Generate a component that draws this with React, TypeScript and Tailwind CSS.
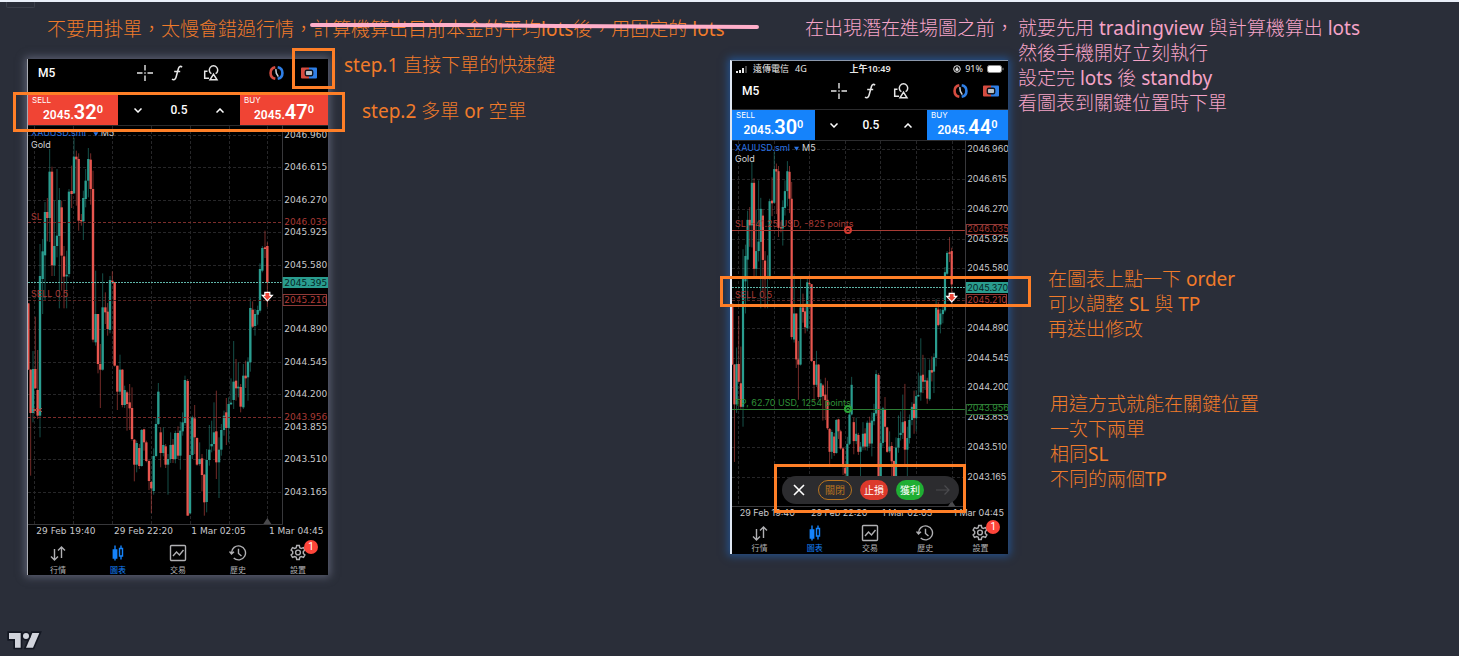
import React from "react";

type Candle = [x: number, top: number, bottom: number, high: number, low: number, up: 0 | 1];

const candles: Candle[] = [
  [25, 538, 737, 538, 737, 0], [32, 737, 867, 735, 1055, 0], [39, 735, 867, 681, 895, 1], [46, 735, 793, 578, 795, 0],
  [53, 798, 875, 678, 885, 0], [60, 456, 875, 360, 940, 1], [68, 382, 465, 345, 570, 1], [75, 264, 394, 234, 530, 1],
  [82, 264, 282, 222, 352, 0], [89, 143, 282, 75, 354, 1], [96, 143, 424, 128, 456, 0], [103, 366, 424, 230, 456, 1],
  [111, 335, 366, 135, 400, 1], [118, 228, 336, 192, 553, 1], [125, 250, 395, 230, 500, 0], [132, 397, 458, 366, 553, 0],
  [140, 452, 457, 380, 553, 1], [147, 203, 450, 195, 460, 1], [155, 201, 210, 125, 252, 0], [162, 98, 208, 42, 210, 1],
  [169, 98, 106, 80, 245, 0], [176, 105, 290, 88, 320, 0], [184, 288, 292, 270, 305, 0], [190, 222, 292, 200, 348, 1],
  [197, 170, 225, 135, 250, 1], [205, 105, 170, 72, 220, 1], [212, 107, 195, 88, 242, 0], [219, 195, 647, 140, 655, 0],
  [227, 570, 655, 440, 665, 1], [234, 570, 720, 570, 748, 0], [241, 720, 737, 660, 852, 0], [248, 550, 737, 448, 740, 1],
  [256, 550, 565, 505, 600, 0], [263, 563, 615, 537, 635, 0], [270, 468, 618, 456, 628, 1], [277, 470, 474, 442, 480, 0],
  [284, 474, 725, 474, 728, 0], [292, 725, 803, 725, 858, 0], [300, 737, 803, 692, 810, 1], [307, 737, 843, 735, 850, 0],
  [314, 798, 843, 785, 852, 1], [321, 805, 840, 800, 920, 0], [329, 835, 853, 780, 918, 0], [336, 852, 945, 790, 950, 0],
  [343, 947, 1022, 945, 1072, 0], [350, 957, 1022, 950, 1045, 1], [358, 972, 1026, 960, 1035, 0], [365, 918, 1026, 915, 1028, 1],
  [372, 916, 955, 914, 980, 0], [379, 955, 1011, 950, 1015, 0], [387, 1011, 1071, 1008, 1098, 0], [394, 1074, 1093, 1070, 1167, 0],
  [401, 996, 1101, 973, 1112, 1], [408, 900, 996, 882, 1000, 1], [415, 803, 900, 777, 903, 1], [422, 925, 987, 910, 1030, 0],
  [430, 963, 987, 910, 997, 1], [437, 967, 1022, 960, 1032, 0], [444, 1005, 1022, 990, 1112, 1], [452, 963, 1005, 925, 1017, 1],
  [459, 962, 1005, 945, 1017, 0], [466, 927, 1005, 920, 1018, 1], [474, 927, 995, 907, 1005, 0], [481, 920, 995, 893, 1037, 1],
  [488, 895, 922, 865, 935, 1], [495, 768, 897, 755, 905, 1], [503, 771, 1175, 765, 1175, 0], [510, 993, 1168, 885, 1172, 1],
  [517, 880, 993, 875, 1005, 1], [524, 883, 940, 843, 990, 0], [531, 942, 1022, 940, 1025, 0], [539, 1005, 1020, 955, 1025, 1],
  [546, 1003, 1053, 990, 1102, 0], [553, 1052, 1135, 1050, 1175, 0], [560, 1008, 1134, 975, 1165, 1], [568, 977, 1008, 903, 1025, 1],
  [575, 960, 967, 890, 985, 1], [582, 925, 960, 835, 980, 1], [589, 922, 1015, 800, 1065, 0], [597, 977, 1015, 940, 1122, 1],
  [604, 918, 977, 900, 995, 1], [612, 875, 918, 860, 935, 1], [619, 865, 912, 822, 963, 0], [626, 840, 912, 820, 955, 1],
  [633, 836, 841, 763, 843, 1], [641, 773, 828, 651, 855, 1], [648, 770, 793, 705, 830, 0], [655, 788, 793, 715, 820, 1],
  [662, 789, 848, 780, 865, 0], [670, 755, 850, 720, 855, 1], [677, 755, 763, 710, 792, 0], [684, 713, 760, 700, 830, 1],
  [691, 552, 715, 523, 743, 1], [698, 557, 608, 532, 612, 0], [705, 570, 606, 555, 635, 1], [713, 558, 572, 545, 602, 1],
  [720, 435, 560, 418, 566, 1], [727, 372, 440, 366, 445, 1], [735, 370, 375, 320, 402, 0], [742, 366, 475, 355, 548, 0],
];

const priceTicks: [number, string][] = [
  [34, "2046.960"], [130, "2046.615"], [228, "2046.270"], [325, "2045.925"], [422, "2045.580"], [519, ""],
  [616, "2044.890"], [714, "2044.545"], [811, "2044.200"], [909, "2043.855"], [1006, "2043.510"], [1103, "2043.165"],
];
const timeLines = [43, 160, 277, 393, 509, 626, 742];
const timeTicks: [number, string][] = [[49, "29 Feb 19:40"], [282, "29 Feb 22:20"], [514, "1 Mar 02:05"], [747, "1 Mar 04:45"]];

const RED = "#e8564f";
const GREEN = "#2a9d8f";

function Chart({ width, height, k, lastPrice, lastY, editing }: {
  width: number; height: number; k: number; lastPrice: string; lastY: number; editing: boolean;
}) {
  const X = (v: number) => (v - 24) * k;
  const Y = (v: number) => (v - 3) * k;
  const axis = X(785);
  const label = X(793);
  return (
    <svg className={`block max-w-full ${editing ? "font-[Inter,sans-serif]" : "font-['DejaVu_Sans',sans-serif]"}`} width={width} height={height} viewBox={`0 0 ${width} ${height}`} fontSize="9" role="img" aria-label="XAUUSD.sml M5">
      <path d={`M0 .5H${width}`} stroke="#2b2b2d" />
      <g stroke="#262628" strokeDasharray="3 2">
        {timeLines.map((x) => <path key={x} d={`M${Math.round(X(x)) + 0.5} 1V${Y(1200)}`} />)}
        {priceTicks.map(([y]) => <path key={y} d={`M0 ${Math.round(Y(y)) + 0.5}H${axis}`} />)}
      </g>
      <path d={`M${Math.round(axis) + 0.5} 0V${Math.round(Y(1200)) + 0.5}H0`} stroke="#38383b" fill="none" />
      {candles.map(([x, top, bottom, high, low, up]) => (
        <g key={x} fill={up ? GREEN : RED}>
          <rect x={X(x) - 0.5} y={Y(high)} width="1" height={(low - high) * k} opacity=".5" />
          <rect x={X(x) - 3.6 * k} y={Y(top)} width={7.2 * k} height={(bottom - top) * k} />
        </g>
      ))}
      <path d={`M0 ${Math.round(Y(lastY)) + 0.5}H${axis}`} stroke="#5fb5a9" strokeDasharray="2 1" />
      <path d={`M0 ${Math.round(Y(527)) + 0.5}H${axis}`} stroke="#5a2422" strokeDasharray="3 2" />
      {editing ? (
        <>
          <path d={`M0 ${Math.round(Y(296)) + 0.5}H${axis}`} stroke="#a83c35" />
          <path d={`M0 ${Math.round(Y(881)) + 0.5}H${axis}`} stroke="#2d7d35" />
          <g fill="none" strokeWidth="2">
            <circle cx="116" cy={Y(297)} r="3" stroke="#d53a30" />
            <circle cx="116" cy={Y(882)} r="3" stroke="#2aa537" />
          </g>
          <circle cx="116" cy={Y(297)} r="1" fill="#d53a30" />
          <circle cx="116" cy={Y(882)} r="1" fill="#2aa537" />
        </>
      ) : (
        <>
          <path d={`M0 ${Math.round(Y(295)) + 0.5}H${axis}M0 ${Math.round(Y(880)) + 0.5}H${axis}`} stroke="#7c2d2b" strokeDasharray="3 2" />
          <path d="M5 283l4 4m0-4l-4 4M10 283l4 4m0-4l-4 4" stroke="#b5413b" />
        </>
      )}
      <g fill="#c9c9cc">
        {priceTicks.map(([y, t]) => <text key={y} x={label} y={Y(y) + 3}>{t}</text>)}
        {timeTicks.map(([x, t]) => <text key={x} x={X(x)} y={Y(1221) + 3}>{t}</text>)}
      </g>
      <g className="font-[Inter,sans-serif]" fill="#a93a35">
        <text x="3" y={Y(278) + 3}>{editing ? "SL, -41.25 USD, -825 points" : "SL"}</text>
        <text x="3" y={Y(510) + 3}>SELL 0.5</text>
      </g>
      {editing && <text x="3" y={Y(862) + 3} fill="#2f9038">TP, 62.70 USD, 1254 points</text>}
      <rect x={axis + 1} y={Math.round(Y(lastY)) - 5} width={width} height="11" fill={GREEN} />
      <text x={label} y={Y(lastY) + 4} fill="#06231f">{lastPrice}</text>
      <rect x={axis + 1.5} y={Math.round(Y(527)) - 5.5} width={width - axis - 3} height="11" fill="#000" stroke="#8e3a37" />
      <text x={label} y={Y(527) + 3} fill="#b13c38">2045.210</text>
      {editing && (
        <>
          <rect x={axis + 1.5} y={Math.round(Y(295)) - 4.5} width={width - axis} height="10" fill="#000" stroke="#8e3a37" />
          <rect x={axis + 1.5} y={Math.round(Y(881)) - 4.5} width={width - axis} height="10" fill="#000" stroke="#2d6a33" />
        </>
      )}
      <text x={label} y={Y(295) + 3} fill="#a93a35">2046.035</text>
      <text x={label} y={Y(880) + 3} fill={editing ? "#2f9038" : "#a93a35"}>2043.956</text>
      <path d={`M${X(742) - 2.5} ${Y(514)}v-3h5v3h2.500l-5 5.500l-5-5.500z`} fill="#ef4638" stroke="#fff" strokeWidth="1.200" />
      <path d={`M${X(742)} ${Y(1182)}l4 6h-8z`} fill="#4a4a4d" />
      <g className="font-[Inter,sans-serif]" fill="#d4d4d6">
        <text x="3" y={Y(28) + 3} fill="#2c74e4">XAUUSD.sml</text>
        <path d={`M${Math.max(X(220), 62)} ${Y(25)}h5l-2.500 4z`} fill="#2c74e4" />
        <text x={Math.max(X(242), 70)} y={Y(28) + 3}>M5</text>
        <text x="3" y={Y(64) + 3}>Gold</text>
      </g>
    </svg>
  );
}

const iconButton = "flex items-center justify-center";

function Toolbar() {
  return (
    <div className="grid h-8 shrink-0 grid-cols-[100fr_34fr_32fr_36fr_31fr_32fr_34fr_2fr] items-center pb-1 text-[#e6e6e6]">
      <button className="pl-2.5 text-left font-[Roboto,sans-serif] text-[12px] leading-4 font-medium text-white">M5</button>
      <button className={iconButton} aria-label="crosshair">
        <svg width="16" height="16" viewBox="0 0 16 16" stroke="currentColor" strokeWidth="1.400"><path d="M8 0v5.500M8 10.500V16M0 8h5.500M10.500 8H16M7.300 8h1.400" /></svg>
      </button>
      <button className={iconButton} aria-label="indicators">
        <svg width="12" height="16" viewBox="0 0 12 16" fill="none" stroke="currentColor" strokeWidth="1.600"><path d="M11 2.200C9.800.8 8 1.200 7.400 3.600L5 12.400C4.400 14.800 2.600 15.300 1 14.200M3.200 6.500h6" /></svg>
      </button>
      <button className={iconButton} aria-label="objects">
        <svg width="16" height="16" viewBox="0 0 16 16" fill="none" stroke="currentColor" strokeWidth="1.500"><path d="M4.500 6.200H1.700v7h4.300M10.500 9.200L7 14.800h7z" /><path d="M8.400 8.700A4.200 4.200 0 1 1 12.600 8.700" /></svg>
      </button>
      <span />
      <button className={iconButton} aria-label="timeframe">
        <svg width="17" height="14" viewBox="0 0 17 14" fill="none" strokeWidth="2.600"><path d="M7.300 1.300A5.800 5.800 0 0 0 7.300 12.700" stroke="#d64c40" /><path d="M9.700 1.300a5.800 5.800 0 0 1 0 11.400" stroke="#2f7fe6" /><path d="M7.800 3.200L8.300 7.200l2 3.400" stroke="#c9ced6" strokeWidth="1.500" /></svg>
      </button>
      <button className={iconButton} aria-label="one click trading">
        <svg width="16" height="12" viewBox="0 0 16 12"><path d="M1 .5h7v11H1a1 1 0 0 1-1-1v-9a1 1 0 0 1 1-1z" fill="#d64c40" /><path d="M8 .5h7a1 1 0 0 1 1 1v9a1 1 0 0 1-1 1H8z" fill="#2f7fe6" /><rect x="4.300" y="3.200" width="7.400" height="5.600" rx="1.500" fill="#b9c2ca" stroke="#10161f" strokeWidth="1.400" /></svg>
      </button>
    </div>
  );
}

function Quote({ side, tone, pips }: { side: string; tone: string; pips: string }) {
  return (
    <button className={`flex min-h-0 min-w-0 flex-col items-start justify-start px-1 text-left text-white ${tone}`}>
      <span className="pt-px font-[Inter,sans-serif] text-[8px] leading-2">{side}</span>
      <span className="flex items-baseline self-center leading-4 font-semibold">
        <span className="text-[12px]">2045.</span>
        <span className="text-[20px]">{pips}</span>
        <span className="self-start text-[11px] leading-3">0</span>
      </span>
    </button>
  );
}

function TradeBar({ tone, sell, buy }: { tone: string; sell: string; buy: string }) {
  return (
    <div className="grid h-[31px] shrink-0 grid-cols-[90fr_122fr_88fr] grid-rows-1 border-t border-[#2b2b2d] font-[Roboto,sans-serif]">
      <Quote side="SELL" tone={tone} pips={sell} />
      <div className="grid grid-cols-3 items-center text-white">
        <button className={iconButton} aria-label="less">
          <svg width="8" height="5" viewBox="0 0 8 5" fill="none" stroke="currentColor" strokeWidth="1.500"><path d="M.5.500L4 4 7.500.500" /></svg>
        </button>
        <input aria-label="Volume" defaultValue="0.5" className="w-full min-w-0 bg-transparent text-center text-[12px] leading-4 font-medium" />
        <button className={iconButton} aria-label="more">
          <svg width="8" height="5" viewBox="0 0 8 5" fill="none" stroke="currentColor" strokeWidth="1.500"><path d="M.5 4.500L4 1l3.500 3.500" /></svg>
        </button>
      </div>
      <Quote side="BUY" tone={tone} pips={buy} />
    </div>
  );
}

const tabs: { label: string; icon: React.ReactNode }[] = [
  { label: "行情", icon: <path d="M5.500 5v11M2 12.500L5.500 16 9 12.500M12.500 14V3M9 6.500L12.500 3 16 6.500" /> },
  { label: "圖表", icon: <><path d="M6 1.500v15M12 1.500v14" /><path d="M4.300 6h3.400v8H4.300z" fill="currentColor" /><path d="M10.500 4.500h3v7.500h-3z" fill="#000" /></> },
  { label: "交易", icon: <><rect x="1.500" y="1.500" width="15" height="15" rx="1" /><path d="M4 12l3.500-4 3 3L14.500 6" /></> },
  { label: "歷史", icon: <><path d="M2.500 9a7 7 0 1 1 2.200 5M.5 7.500L2.500 10 5 7.800M9.500 4.800V9.500L12.500 12" /></> },
  { label: "設置", icon: <><path d="M7.700 1.500h2.600l.5 2.200 1.500.8 2.200-.8 1.400 2.400-1.600 1.500v1.800l1.600 1.500-1.400 2.400-2.200-.8-1.500.8-.5 2.200H7.700l-.5-2.200-1.500-.8-2.200.8-1.400-2.400 1.600-1.500V7.600L2.100 6.100l1.400-2.400 2.200.8 1.500-.8z" /><circle cx="9" cy="8.500" r="2.400" /></> },
];

function Nav({ gap }: { gap: string }) {
  return (
    <nav className="grid grid-cols-5 pt-1">
      {tabs.map((t, i) => (
        <button key={t.label} className={`relative flex flex-col items-center ${gap} ${i === 1 ? "text-[#1583fb]" : "text-[#b0b0b3]"}`}>
          <svg width="18" height="18" viewBox="0 0 18 18" fill="none" stroke="currentColor" strokeWidth="1.400">{t.icon}</svg>
          <span className="text-[8px] leading-3">{t.label}</span>
          {i === 4 && (
            <span className="absolute -top-1 left-1/2 ml-1.5 flex size-3.5 items-center justify-center rounded-full bg-[#fd453a] font-[Roboto,sans-serif] text-[10px] leading-3 text-white">1</span>
          )}
        </button>
      ))}
    </nav>
  );
}

function StatusBar() {
  return (
    <div className="grid h-4 shrink-0 grid-cols-3 items-center px-1 text-[9px] leading-3 text-[#e8e8e8]">
      <div className="flex items-center gap-1.5 whitespace-nowrap">
        <svg width="11" height="7" viewBox="0 0 11 7" fill="currentColor"><path d="M0 5h2v2H0zM3 4h2v3H3zM6 2h2v5H6z" /><path d="M9 0h2v7H9z" opacity=".3" /></svg>
        <span>遠傳電信</span>
        <span>4G</span>
      </div>
      <span className="text-center font-semibold whitespace-nowrap">上午10:49</span>
      <div className="flex items-center justify-end gap-1">
        <svg width="8" height="8" viewBox="0 0 8 8" fill="none" stroke="currentColor"><circle cx="4" cy="4" r="3.300" /><path d="M2.800 4h2.400v1.500H2.800zM3.300 4V2.800h1.400V4" fill="currentColor" strokeWidth=".6" /></svg>
        <span>91%</span>
        <svg width="17" height="8" viewBox="0 0 17 8"><rect x=".5" y=".5" width="14" height="7" rx="2" fill="#fff" stroke="#8b8b8b" /><path d="M16 2.800v2.400" stroke="#8b8b8b" /></svg>
      </div>
    </div>
  );
}

function OrderActions() {
  const pill = "flex h-5 items-center justify-center rounded-full text-[10px] leading-3";
  return (
    <div className="absolute bottom-[50px] left-[50px] flex h-7 w-[177px] items-center rounded-full bg-[#2c2c2f] pl-2.5">
      <button aria-label="cancel" className="text-white">
        <svg width="14" height="14" viewBox="0 0 14 14" stroke="currentColor" strokeWidth="1.600"><path d="M2 2l10 10M12 2L2 12" /></svg>
      </button>
      <button className={`${pill} ml-3 w-[34px] border border-[#b9741f] text-[#b9741f]`}>關閉</button>
      <button className={`${pill} ml-2 w-7 bg-[#dc392c] text-white`}>止損</button>
      <button className={`${pill} ml-2 w-7 bg-[#1fae33] text-white`}>獲利</button>
      <button aria-label="send" className="ml-3 text-[#4b4b4e]">
        <svg width="14" height="12" viewBox="0 0 14 12" fill="none" stroke="currentColor" strokeWidth="1.200"><path d="M0 6h13M8.500 1.500L13 6l-4.500 4.500" /></svg>
      </button>
    </div>
  );
}

const note = "absolute whitespace-nowrap font-['Noto_Sans','Noto_Sans_CJK_TC_Light','Noto_Sans_CJK_TC',sans-serif] text-[19px] leading-[25px]";
const frame = "pointer-events-none absolute border-3 border-[#ff7f27]";

export default function App() {
  return (
    <main lang="zh-TW" className="relative min-h-screen overflow-hidden border-t-2 border-[#e9eff9] bg-[#2a2e39] font-['Noto_Sans','Noto_Sans_CJK_TC',sans-serif]">
      <div className="absolute top-0 left-1.5 h-1.5 w-[29px] rounded-b-xs border border-t-0 border-[#3c404b]" />

      <section className="absolute top-[57px] left-[27px] flex h-[516px] w-[301px] flex-col overflow-hidden border-l border-[#a9abb2] bg-black shadow-[0_0_8px_2px_#5c6072]">
        <Toolbar />
        <div className="pt-[3px]">
          <TradeBar tone="bg-[#f04434]" sell="32" buy="47" />
        </div>
        <div className="shrink-0"><Chart width={300} height={415} k={1 / 3} lastPrice="2045.395" lastY={475} editing={false} /></div>
        <Nav gap="gap-0.5" />
      </section>

      <section className="absolute top-[58px] left-[730px] flex h-[494px] w-[278px] flex-col overflow-hidden border-t border-l-2 border-t-[#8b98ab] border-l-[#dfe7f3] bg-black shadow-[0_0_8px_2px_#24518c]">
        <StatusBar />
        <Toolbar />
        <TradeBar tone="bg-[#1583fb]" sell="30" buy="44" />
        <Chart width={276} height={380} k={0.306} lastPrice="2045.370" lastY={483} editing />
        <Nav gap="gap-0" />
        <OrderActions />
      </section>

      <p className={`${note} top-[15px] left-[47px] text-[#f17b2a]`}>
        不要用掛單，太慢會錯過行情，計算機算出目前本金的平均lots後，用固定的 lots
      </p>
      <svg className="absolute top-[20px] left-[308px]" width="454" height="10" viewBox="0 0 454 10" fill="none"><path d="M4 3H150L250 4L449 5" stroke="#ffaec9" strokeWidth="4" strokeLinecap="round" /></svg>
      <p className={`${note} top-[51px] left-[344px] text-[#f17b2a]`}>step.1 直接下單的快速鍵</p>
      <p className={`${note} top-[97px] left-[362px] text-[#f17b2a]`}>step.2 多單 or 空單</p>

      <div className={`${note} top-[14px] left-[805px] flex gap-1 text-[#f5a3c7]`}>
        <p>在出現潛在進場圖之前，</p>
        <p>
          就要先用 tradingview 與計算機算出 lots<br />
          然後手機開好立刻執行<br />
          設定完 lots 後 standby<br />
          看圖表到關鍵位置時下單
        </p>
      </div>
      <p className={`${note} top-[265px] left-[1048px] text-[#f17b2a]`}>
        在圖表上點一下 order<br />
        可以調整 SL 與 TP<br />
        再送出修改
      </p>
      <p className={`${note} top-[390px] left-[1050px] text-[#f17b2a]`}>
        用這方式就能在關鍵位置<br />
        一次下兩單<br />
        相同SL<br />
        不同的兩個TP
      </p>

      <div className={`${frame} top-[46px] left-[292px] h-[41px] w-[43px]`} />
      <div className={`${frame} top-[90px] left-[13px] h-10 w-[332px]`} />
      <div className={`${frame} top-[274px] left-[720px] h-[31px] w-[311px]`} />
      <div className={`${frame} top-[462px] left-[774px] h-[49px] w-[192px]`} />

      <a href="#" aria-label="TradingView" className="absolute top-[628px] left-[6px]">
        <svg width="36" height="22" viewBox="18 60 108 66" fill="#d1d4dc" stroke="#131722" strokeWidth="10" paintOrder="stroke"><path d="M27 69H62V113H45V87H27z" /><path d="M97 69H118L99 113H78z" /><circle cx="78" cy="78" r="9" /></svg>
      </a>
    </main>
  );
}
